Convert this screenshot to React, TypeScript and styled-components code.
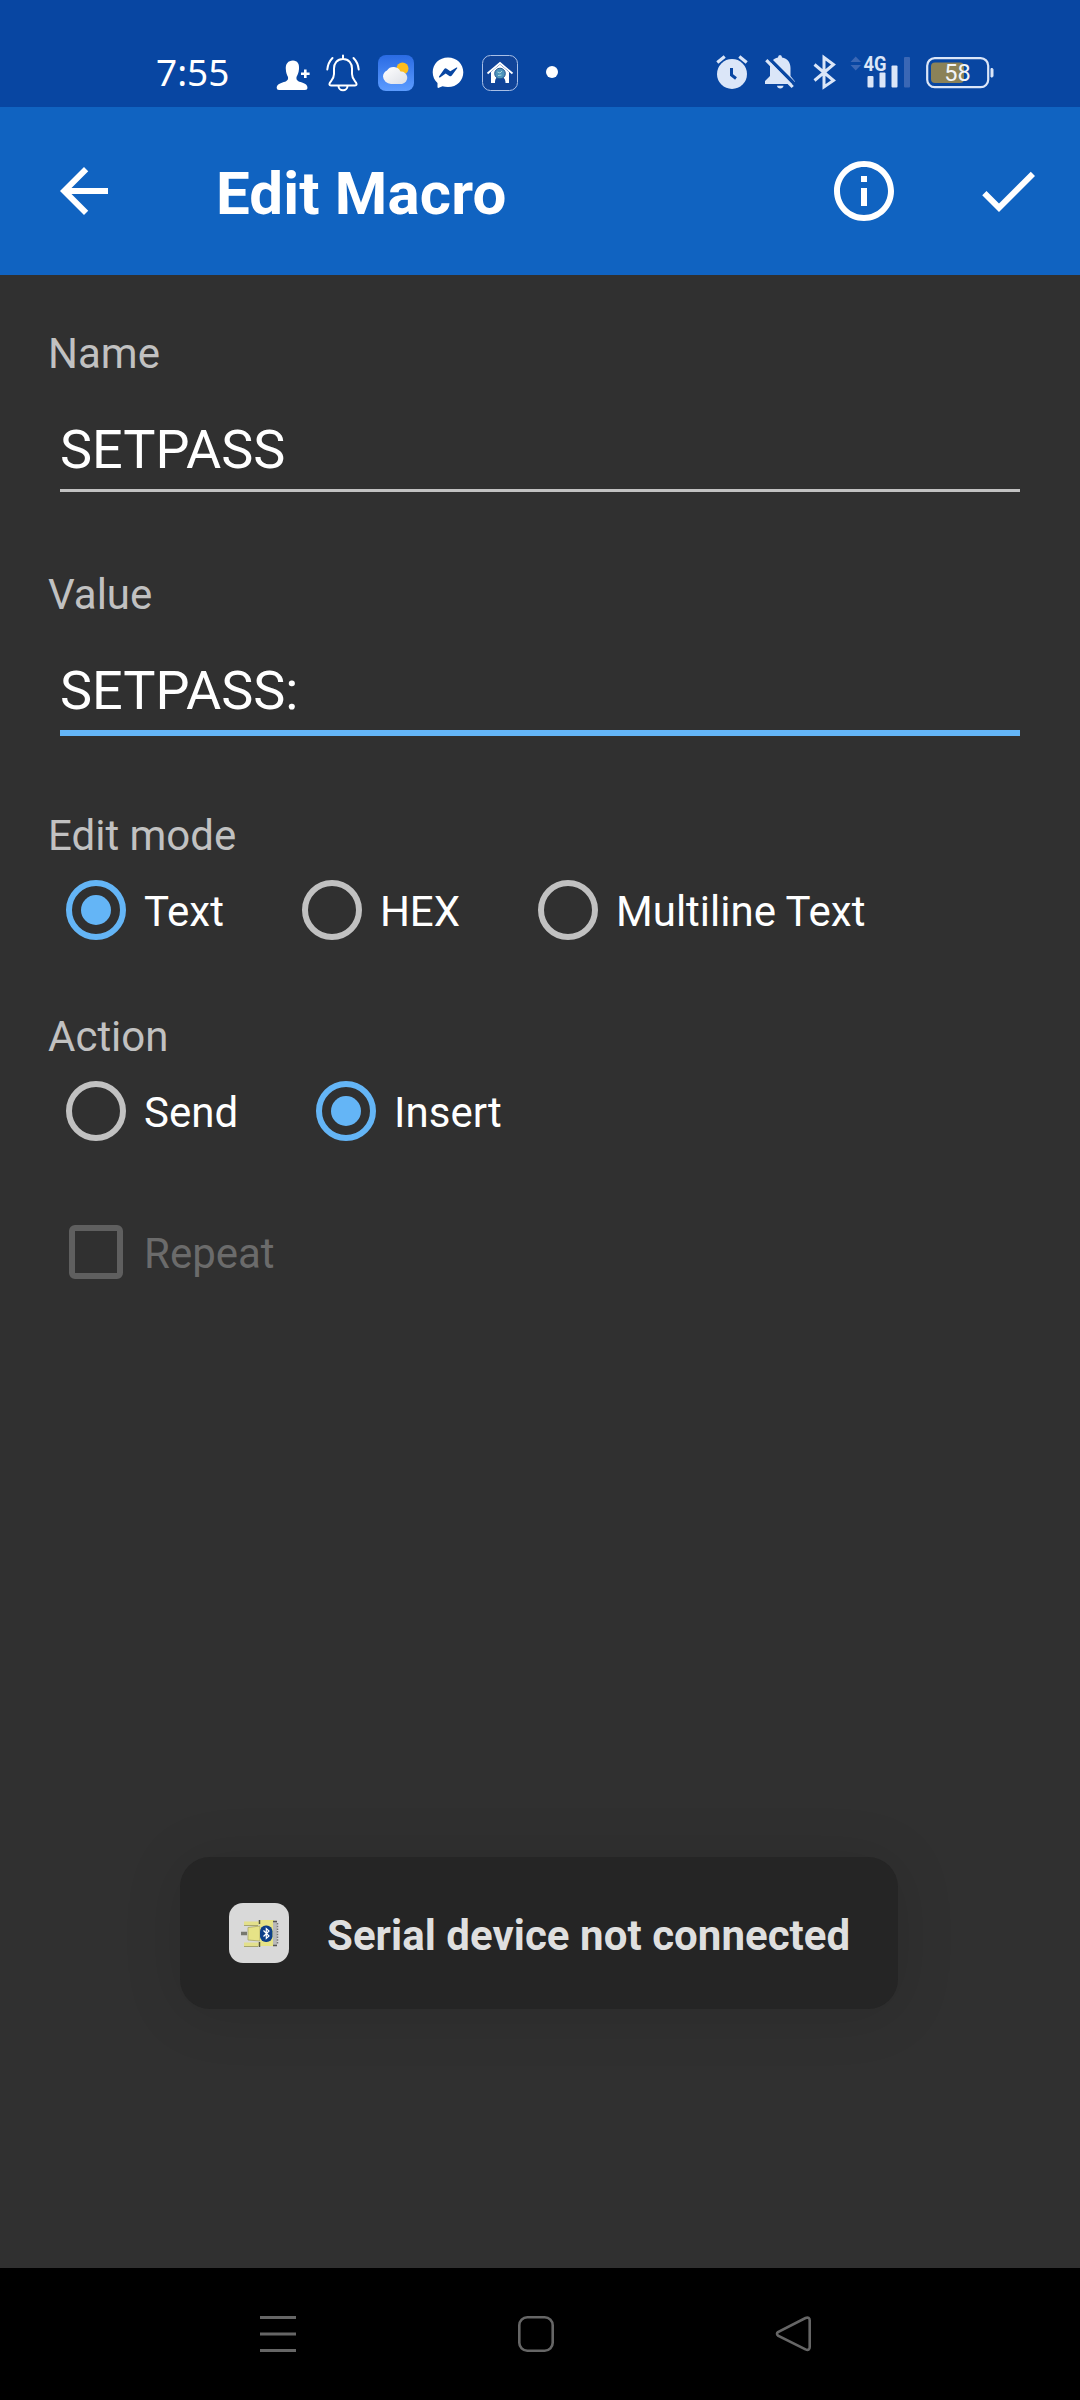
import React from "react";
import styled, { createGlobalStyle } from "styled-components";

const color = {
  status: "#0846a2",
  bar: "#1063c1",
  page: "#303030",
  accent: "#64b5f6",
  muted: "#c1c1c1",
  disabled: "#5f5f5f",
  statusIcon: "#dbe6f8",
};

const GlobalStyle = createGlobalStyle`
  * { box-sizing: border-box; }
  body {
    margin: 0;
    background: ${color.page};
    font-family: Roboto, "Liberation Sans", sans-serif;
  }
`;

const Screen = styled.div`
  display: flex;
  flex-direction: column;
  width: 1080px;
  height: 2400px;
  background: ${color.page};
  overflow: hidden;
`;

const StatusBar = styled.header`
  display: flex;
  align-items: flex-start;
  height: 107px;
  padding: 55px 86px 0 156px;
  background: ${color.status};
`;

const Clock = styled.time`
  width: 118px;
  margin-top: -8px;
  font: 400 37px/50px "Noto Sans", sans-serif;
  color: #fff;
`;

const Notifications = styled.div`
  display: flex;
  gap: 16px;
`;

const SystemIcons = styled.div`
  display: flex;
  gap: 12px;
  margin-left: auto;
`;

const Glyph = styled.svg`
  display: block;
  flex: none;
  overflow: visible;
`;

const AppBar = styled.div`
  display: flex;
  align-items: center;
  height: 168px;
  padding: 0 36px 0 48px;
  background: ${color.bar};
  color: #fff;
`;

const Title = styled.h1`
  flex: 1;
  margin: 5px 0 0 96px;
  font-size: 60px;
  font-weight: 700;
  line-height: 72px;
  letter-spacing: 0.15px;
`;

const Actions = styled.div`
  display: flex;
  gap: 72px;
`;

const Form = styled.main`
  position: relative;
  flex: 1;
  padding: 54px 48px 0;
`;

const Field = styled.div`
  height: 241px;
`;

const Label = styled.div`
  font-size: 42px;
  line-height: 50px;
  color: ${color.muted};
`;

const Input = styled.div<{ $focused?: boolean }>`
  margin: 39px 12px 0;
  padding-bottom: 7px;
  font-size: 54px;
  line-height: 64px;
  color: #fff;
  border-bottom: ${(p) => (p.$focused ? `6px solid ${color.accent}` : `3px solid ${color.muted}`)};
`;

const Group = styled.section<{ $height: number }>`
  height: ${(p) => p.$height}px;
`;

const Choices = styled.div`
  display: flex;
  gap: 60px;
  margin-top: 19px;
`;

const Choice = styled.div<{ $disabled?: boolean }>`
  display: flex;
  align-items: center;
  gap: 18px;
  height: 60px;
  padding-left: 18px;
  font-size: 42px;
  line-height: 50px;
  color: ${(p) => (p.$disabled ? "#6b6b6b" : "#fff")};
`;

const ChoiceText = styled.span`
  padding-top: 4px;
`;

const RadioMark = styled.span<{ $checked?: boolean }>`
  display: grid;
  place-items: center;
  width: 60px;
  height: 60px;
  border: 6px solid ${(p) => (p.$checked ? color.accent : color.muted)};
  border-radius: 50%;

  &::after {
    content: "";
    width: 30px;
    height: 30px;
    border-radius: 50%;
    background: ${(p) => (p.$checked ? color.accent : "transparent")};
  }
`;

const CheckMark = styled.span`
  width: 54px;
  height: 54px;
  margin: 0 3px;
  border: 6px solid ${color.disabled};
  border-radius: 6px;
`;

const Toast = styled.div`
  position: absolute;
  left: 180px;
  top: 1582px;
  display: flex;
  align-items: center;
  width: 718px;
  height: 152px;
  padding: 0 48px 0 49px;
  gap: 38px;
  border-radius: 30px;
  background: #252525;
  box-shadow: 0 4px 60px rgba(0, 0, 0, 0.12);
  color: #dfdfdf;
  font-size: 42px;
  font-weight: 700;
  line-height: 50px;
  letter-spacing: 0.04px;
  white-space: nowrap;
`;

const ToastText = styled.span`
  padding-top: 5px;
`;

const NavBar = styled.nav`
  display: flex;
  justify-content: space-between;
  height: 132px;
  padding: 48px 268px 0 260px;
  background: #000;
`;

function Radio({ text, checked }: { text: string; checked?: boolean }) {
  return (
    <Choice>
      <RadioMark $checked={checked} />
      <ChoiceText>{text}</ChoiceText>
    </Choice>
  );
}

function ContactIcon() {
  return (
    <Glyph width="36" height="36" fill="#fff">
      <path d="M19 5.500C23.500 5.500 25.500 9 25 14C24.700 18 23.500 20 22.500 22C22 25.500 24 26.300 28 27.500C31.500 28.700 33.500 30 33.500 33Q33.500 35 31 35H5Q2.700 35 2.700 33C2.700 30 5 28.700 8.500 27.500C12.500 26.300 14.500 25.500 14 22C13 20 12 18 11.800 14C11.500 9 14 5.500 19 5.500Z" />
      <path d="M27 17.500h3v-3h2.600v3h3v2.600h-3v3h-2.600v-3h-3z" />
    </Glyph>
  );
}

function BellIcon() {
  return (
    <Glyph width="36" height="36" fill="none" stroke="#fff" strokeWidth="2" strokeLinecap="round" strokeLinejoin="round">
      <path d="M17 4V.5M17 4C11 4 8 8.500 8 13.500V19C8 23.500 6 25 4 27.500Q2.500 30.500 5 30.500H29Q31.500 30.500 30 27.500C28 25 26 23.500 26 19V13.500C26 8.500 23 4 17 4Z" />
      <path d="M12.500 31a4.500 4.300 0 0 0 9 0" />
      <path d="M6.500 3Q2 7.500 1.300 14.500M27.500 3Q32 7.500 32.700 14.500" />
    </Glyph>
  );
}

function WeatherIcon() {
  return (
    <Glyph width="36" height="36">
      <defs>
        <linearGradient id="sky" x2="0" y2="1">
          <stop offset="0" stopColor="#2a6be4" />
          <stop offset="1" stopColor="#5c9cff" />
        </linearGradient>
        <linearGradient id="cloud" x2="1" y2="1">
          <stop offset="0" stopColor="#fff" />
          <stop offset="1" stopColor="#dcdfe6" />
        </linearGradient>
      </defs>
      <rect width="36" height="36" rx="8" fill="url(#sky)" />
      <circle cx="24.500" cy="13.500" r="6" fill="#fdbd1e" />
      <path d="M13 29A8 8 0 0 1 5 21.500A7 7 0 0 1 9 15.500A7.800 7.800 0 0 1 22.500 16.500A6.300 6.300 0 0 1 24 29Z" fill="url(#cloud)" />
    </Glyph>
  );
}

function MessengerIcon() {
  return (
    <Glyph width="36" height="36">
      <path d="M18 2.500C9 2.500 2.700 9 2.700 17.200C2.700 21.500 4.400 25.200 7.500 27.900V32Q7.600 33.200 8.800 32.800L12.500 31.200Q15 32 18 32C27 32 33.300 25.500 33.300 17.200S27 2.500 18 2.500Z" fill="#fff" />
      <path d="M9 21.500L14.300 14Q15.300 12.800 16.700 13.700L20.300 16.300L26.500 12.500Q27.700 12.200 27.200 13.300L21.800 20.600Q20.700 21.800 19.400 20.900L15.700 18.400L10 22.500Q8.500 22.800 9 21.500Z" fill={color.status} />
    </Glyph>
  );
}

function HomeIcon() {
  return (
    <Glyph width="36" height="36">
      <rect x=".5" y=".5" width="35" height="35" rx="8" fill="#104499" stroke="#a9bfe6" />
      <path d="M9 27.500V17L18 9.500L27 17V28H23.500C23.500 24 22 22 18 22S13 24 13 28H9Z" fill="#fff" />
      <path d="M5.500 18.500L18 8L30.500 18.500" fill="none" stroke="#fff" strokeWidth="1.800" />
      <circle cx="18" cy="18.500" r="5.300" fill="#4c93ba" stroke="#21558f" strokeWidth="1" />
      <path d="M15.500 17l2.500 1l2-2M16 20.500l3.500-.5" stroke="#a8d7dd" strokeWidth="1" fill="none" />
    </Glyph>
  );
}

function AlarmIcon() {
  return (
    <Glyph width="36" height="36">
      <circle cx="18" cy="19" r="15" fill={color.statusIcon} />
      <path d="M3.300 7.500L10.700 1.500M25.300 1.500L32.700 7.500" stroke={color.statusIcon} strokeWidth="3.200" />
      <path d="M17.500 13V20L22 23.500" fill="none" stroke={color.status} strokeWidth="3" />
    </Glyph>
  );
}

function MutedIcon() {
  return (
    <Glyph width="36" height="36">
      <path d="M16 2.500Q16 0 18 0T20 2.500C25.500 3.500 28.500 7.500 28.500 13V21L33 26.500V29H3V26L8 21V13C8 7.500 11 3.500 16 2.500Z" fill={color.statusIcon} />
      <path d="M15 30.700h6.500a3.300 3.300 0 0 1-6.500 0z" fill={color.statusIcon} />
      <path d="M6.500 3L33 29.500" stroke={color.status} strokeWidth="3.500" />
      <path d="M4.300 5.200L30.700 32" stroke={color.statusIcon} strokeWidth="3.200" />
    </Glyph>
  );
}

function BluetoothIcon() {
  return (
    <Glyph width="24" height="36" fill="none" stroke={color.statusIcon} strokeWidth="3">
      <path d="M4.500 9.500L23.500 25.500L14 32V2.500L23.500 9.500L4.500 25.500" />
    </Glyph>
  );
}

function SignalIcon() {
  return (
    <Glyph width="68" height="36" fill={color.statusIcon}>
      <path d="M4.500 7L9.700 1.500L15 7ZM4.500 10L9.700 15.500L15 10Z" fill="#3a67b5" />
      <text x="17.500" y="15.500" fontSize="21" fontWeight="700" textLength="23" lengthAdjust="spacingAndGlyphs">4G</text>
      <rect x="21.500" y="21" width="6" height="11.500" rx="1" />
      <rect x="33.500" y="17.500" width="6" height="15" rx="1" />
      <rect x="45.500" y="10.500" width="6" height="22" rx="1" />
      <rect x="58" y="2" width="6" height="30.500" rx="1" fill="#3a67b5" />
    </Glyph>
  );
}

function BatteryIcon() {
  return (
    <Glyph width="68" height="36">
      <rect x="5" y="7.500" width="33" height="20.500" rx="4" fill="#8b8258" />
      <rect x="1.200" y="3.200" width="61" height="29" rx="7.500" fill="none" stroke={color.statusIcon} strokeWidth="2.200" />
      <path d="M65 13.500h1q1 0 1 1v6.500q0 1-1 1h-1z" fill={color.statusIcon} stroke={color.statusIcon} />
      <text x="31.500" y="26" fontSize="23.500" fontWeight="400" textAnchor="middle" fill="#f3f5f8">58</text>
    </Glyph>
  );
}

function DeviceIcon() {
  return (
    <Glyph width="60" height="60">
      <rect width="60" height="60" rx="14" fill="#d9d9d9" />
      <path d="M12 30.500h6" stroke="#77776f" strokeWidth="3.500" />
      <path d="M15 18.500H31V22H15ZM15 39.500H31V43H15Z" fill="#e3e08c" />
      <path d="M15 22.500H29M15 43.500H29" stroke="#a5a46f" strokeWidth="1" />
      <path d="M19 24.500L31 23V38L19 37Z" fill="#e6e387" stroke="#aaa766" strokeWidth=".8" />
      <path d="M31 17H45V43H31Z" fill="#e6e387" />
      <path d="M30.500 17v4M30.500 39v5" stroke="#54543c" strokeWidth="1.500" />
      <path d="M46 19V42" stroke="#b9b9b9" strokeWidth="4" />
      <path d="M48.500 20V41" stroke="#777" strokeWidth="1.500" strokeDasharray="1.500 1.200" />
      <path d="M44 18.500h4M44 42.500h4" stroke="#555" strokeWidth="1.300" />
      <rect x="31" y="22.500" width="12.500" height="16.500" rx="5.800" fill="#0d3f88" />
      <path d="M34.500 27.500L40 33L37.300 35.500V25.500L40 28L34.500 33.500" fill="none" stroke="#fff" strokeWidth="1.200" />
    </Glyph>
  );
}

export default function App() {
  return (
    <Screen>
      <GlobalStyle />
      <StatusBar>
        <Clock>7:55</Clock>
        <Notifications>
          <ContactIcon />
          <BellIcon />
          <WeatherIcon />
          <MessengerIcon />
          <HomeIcon />
          <Glyph width="36" height="36">
            <circle cx="18" cy="17" r="6" fill="#fff" />
          </Glyph>
        </Notifications>
        <SystemIcons>
          <AlarmIcon />
          <MutedIcon />
          <BluetoothIcon />
          <SignalIcon />
          <BatteryIcon />
        </SystemIcons>
      </StatusBar>

      <AppBar>
        <Glyph width="72" height="72" viewBox="0 0 24 24" fill="#fff">
          <path d="M20 11H7.830l5.590-5.590L12 4l-8 8 8 8 1.410-1.410L7.830 13H20v-2z" />
        </Glyph>
        <Title>Edit Macro</Title>
        <Actions>
          <Glyph width="72" height="72" viewBox="0 0 24 24" fill="#fff">
            <path d="M11 7h2v2h-2zm0 4h2v6h-2zm1-9C6.480 2 2 6.480 2 12s4.480 10 10 10 10-4.480 10-10S17.520 2 12 2zm0 18c-4.410 0-8-3.590-8-8s3.590-8 8-8 8 3.590 8 8-3.590 8-8 8z" />
          </Glyph>
          <Glyph width="72" height="72" viewBox="0 0 24 24" fill="#fff">
            <path d="M9 16.170L4.830 12l-1.420 1.410L9 19 21 7l-1.410-1.410z" />
          </Glyph>
        </Actions>
      </AppBar>

      <Form>
        <Field>
          <Label>Name</Label>
          <Input>SETPASS</Input>
        </Field>
        <Field>
          <Label>Value</Label>
          <Input $focused>SETPASS:</Input>
        </Field>
        <Group $height={201}>
          <Label>Edit mode</Label>
          <Choices>
            <Radio text="Text" checked />
            <Radio text="HEX" />
            <Radio text="Multiline Text" />
          </Choices>
        </Group>
        <Group $height={210}>
          <Label>Action</Label>
          <Choices>
            <Radio text="Send" />
            <Radio text="Insert" checked />
          </Choices>
        </Group>
        <Choice $disabled>
          <CheckMark />
          <ChoiceText>Repeat</ChoiceText>
        </Choice>

        <Toast role="status">
          <DeviceIcon />
          <ToastText>Serial device not connected</ToastText>
        </Toast>
      </Form>

      <NavBar>
        <Glyph width="36" height="36" stroke="#666" strokeWidth="3">
          <path d="M0 1.500H36M0 18H36M0 34.500H36" />
        </Glyph>
        <Glyph width="36" height="36" fill="none" stroke="#666" strokeWidth="2.600">
          <rect x="1.300" y="1.300" width="33.400" height="33.400" rx="8" />
        </Glyph>
        <Glyph width="36" height="36" fill="none" stroke="#666" strokeWidth="2.600">
          <path d="M2 16Q0 17.800 2 19.600L29.500 33.400Q33.700 35 33.700 31V4.500Q33.700 .5 29.500 2Z" />
        </Glyph>
      </NavBar>
    </Screen>
  );
}
